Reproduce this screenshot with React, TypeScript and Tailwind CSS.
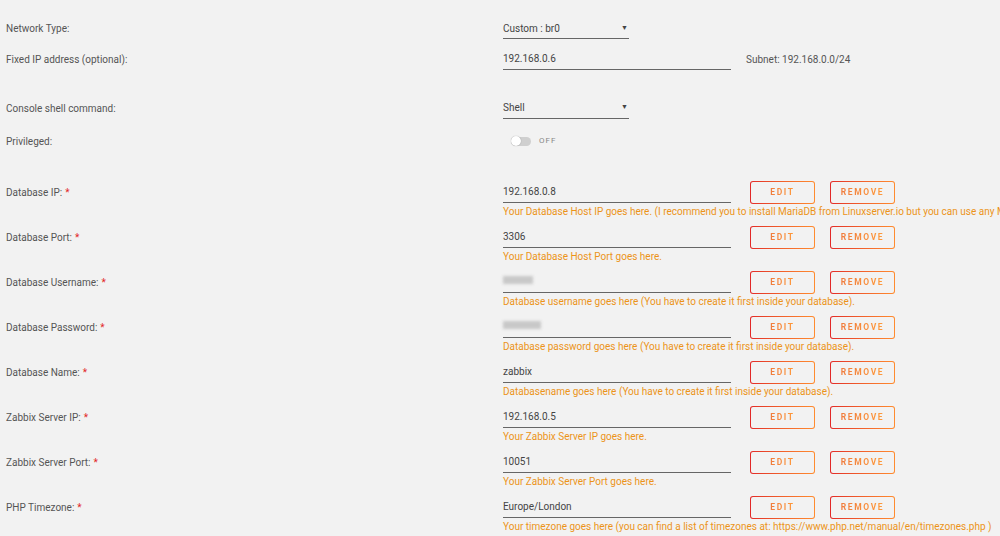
import React from "react";

const font = { fontFamily: 'Roboto, "Liberation Sans", sans-serif' };

function Label({ text, req }: { text: string; req?: boolean }) {
  return (
    <div className="w-[503px] pl-[6px] h-[22px] flex items-center text-[10px] text-[#555] shrink-0">
      <span>{text}</span>
      {req && <span className="text-[#e22828] ml-[3px]">*</span>}
    </div>
  );
}

function Btn({ text }: { text: string }) {
  return (
    <div className="p-[1px] rounded-[3px] bg-gradient-to-r from-[#e22828] to-[#ff8c2f] w-[65px] h-[23px]">
      <div className="w-full h-full rounded-[2px] bg-[#f2f2f2] flex items-center justify-center">
        <span className="text-[8.5px] font-bold tracking-[1.6px] bg-gradient-to-r from-[#f07b3c] to-[#ff9a3a] bg-clip-text text-transparent">
          {text}
        </span>
      </div>
    </div>
  );
}

function DbRow({
  label,
  value,
  help,
  blur,
}: {
  label: string;
  value?: string;
  help: string;
  blur?: number;
}) {
  return (
    <div className="flex items-start h-[45px]">
      <Label text={label} req />
      <div className="flex flex-col">
        <div className="flex items-start">
          <div className="w-[228px] h-[22px] border-b-[1.5px] border-[#666] flex items-center text-[10px] text-[#444]">
            {value}
            {blur && (
              <div
                className="h-[8px] bg-[#c8c8c8] blur-[1.5px] mt-[-4px]"
                style={{ width: blur }}
              />
            )}
          </div>
          <div className="ml-[19px] flex gap-[15px]">
            <Btn text="EDIT" />
            <Btn text="REMOVE" />
          </div>
        </div>
        <div className="h-[13px] mt-[1px] text-[10px] text-[#ec9419] whitespace-nowrap leading-[13px]">
          {help}
        </div>
      </div>
    </div>
  );
}

export default function App() {
  return (
    <div
      className="w-[1000px] h-[536px] bg-[#f2f2f2] overflow-hidden pt-[18px]"
      style={font}
    >
      <div className="flex items-center h-[21px]">
        <Label text="Network Type:" />
        <div className="w-[126px] h-[21px] border-b-[1.5px] border-[#666] flex items-center justify-between text-[10px] text-[#444]">
          <span>Custom : br0</span>
          <span className="text-[7px] mr-[1px]">▼</span>
        </div>
      </div>
      <div className="flex items-center h-[22px] mt-[9px]">
        <Label text="Fixed IP address (optional):" />
        <div className="w-[228px] h-[22px] border-b-[1.5px] border-[#666] flex items-center text-[10px] text-[#444]">
          192.168.0.6
        </div>
        <div className="ml-[15px] text-[10px] text-[#555]">Subnet: 192.168.0.0/24</div>
      </div>
      <div className="flex items-center h-[22px] mt-[27px]">
        <Label text="Console shell command:" />
        <div className="w-[126px] h-[22px] border-b-[1.5px] border-[#666] flex items-center justify-between text-[10px] text-[#444]">
          <span>Shell</span>
          <span className="text-[7px] mr-[1px]">▼</span>
        </div>
      </div>
      <div className="flex items-center h-[22px] mt-[11px]">
        <Label text="Privileged:" />
        <div className="ml-[8px] w-[20px] h-[9px] rounded-full bg-[#cfcfcf] relative">
          <div className="absolute left-0 top-[-0.5px] w-[10px] h-[10px] rounded-full bg-white shadow-[0_0_1px_rgba(0,0,0,0.4)]" />
        </div>
        <span className="ml-[8px] text-[8px] tracking-[1px] text-[#888]">OFF</span>
      </div>
      <div className="mt-[29px]">
        <DbRow
          label="Database IP:"
          value="192.168.0.8"
          help="Your Database Host IP goes here. (I recommend you to install MariaDB from Linuxserver.io but you can use any MySQL database)"
        />
        <DbRow label="Database Port:" value="3306" help="Your Database Host Port goes here." />
        <DbRow
          label="Database Username:"
          blur={30}
          help="Database username goes here (You have to create it first inside your database)."
        />
        <DbRow
          label="Database Password:"
          blur={38}
          help="Database password goes here (You have to create it first inside your database)."
        />
        <DbRow
          label="Database Name:"
          value="zabbix"
          help="Databasename goes here (You have to create it first inside your database)."
        />
        <DbRow label="Zabbix Server IP:" value="192.168.0.5" help="Your Zabbix Server IP goes here." />
        <DbRow label="Zabbix Server Port:" value="10051" help="Your Zabbix Server Port goes here." />
        <DbRow
          label="PHP Timezone:"
          value="Europe/London"
          help="Your timezone goes here (you can find a list of timezones at: https://www.php.net/manual/en/timezones.php )"
        />
      </div>
    </div>
  );
}
